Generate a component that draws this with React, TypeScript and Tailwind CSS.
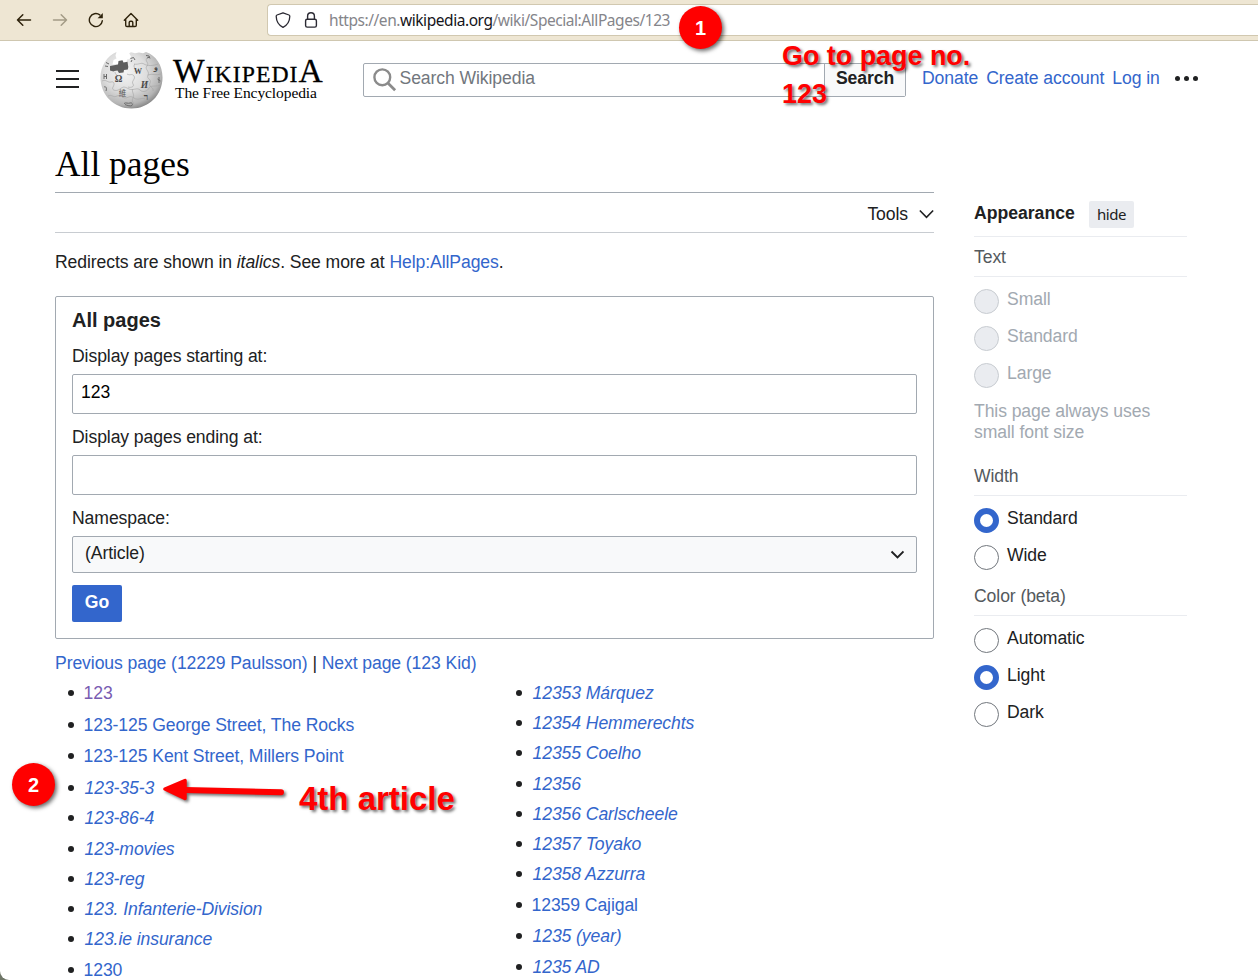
import React from "react";

type Entry = { title: string; row: string; redirect?: boolean; visited?: boolean };

const leftEntries: Entry[] = [
  { title: "123", row: "h-[32px]", visited: true },
  { title: "123-125 George Street, The Rocks", row: "h-[31px]" },
  { title: "123-125 Kent Street, Millers Point", row: "h-[32px]" },
  { title: "123-35-3", row: "h-[30px]", redirect: true },
  { title: "123-86-4", row: "h-[31px]", redirect: true },
  { title: "123-movies", row: "h-[30px]", redirect: true },
  { title: "123-reg", row: "h-[30px]", redirect: true },
  { title: "123. Infanterie-Division", row: "h-[30px]", redirect: true },
  { title: "123.ie insurance", row: "h-[31px]", redirect: true },
  { title: "1230", row: "h-[31px]" },
];

const rightEntries: Entry[] = [
  { title: "12353 Márquez", row: "h-[30px]", redirect: true },
  { title: "12354 Hemmerechts", row: "h-[30px]", redirect: true },
  { title: "12355 Coelho", row: "h-[31px]", redirect: true },
  { title: "12356", row: "h-[30px]", redirect: true },
  { title: "12356 Carlscheele", row: "h-[30px]", redirect: true },
  { title: "12357 Toyako", row: "h-[30px]", redirect: true },
  { title: "12358 Azzurra", row: "h-[31px]", redirect: true },
  { title: "12359 Cajigal", row: "h-[31px]" },
  { title: "1235 (year)", row: "h-[31px]", redirect: true },
  { title: "1235 AD", row: "h-[31px]", redirect: true },
];

function BrowserBar() {
  return (
    <div className="flex h-[41px] shrink-0 items-center border-b border-[#cfc7b0] bg-[#eee6d3]">
      <svg className="ml-4 h-4 w-4 shrink-0" viewBox="0 0 16 16" fill="none" stroke="#2e230c" strokeWidth="1.5" strokeLinecap="round" strokeLinejoin="round">
        <path d="M14.5 8H1.5M6.8 2.7L1.5 8l5.3 5.3" />
      </svg>
      <svg className="ml-5 h-4 w-4 shrink-0" viewBox="0 0 16 16" fill="none" stroke="#a39b86" strokeWidth="1.5" strokeLinecap="round" strokeLinejoin="round">
        <path d="M1.5 8h13M9.2 2.7L14.5 8l-5.3 5.3" />
      </svg>
      <svg className="ml-5 h-4 w-4 shrink-0" viewBox="0 0 16 16" fill="none" stroke="#2e230c" strokeWidth="1.4" strokeLinecap="round">
        <path d="M14.300 8.800A6.500 6.500 0 1 1 11.800 2.900" />
        <path d="M14.800 1v5.200H9.600z" fill="#2e230c" stroke="none" />
      </svg>
      <svg className="ml-[19px] h-4 w-4 shrink-0" viewBox="0 0 16 16" fill="none" stroke="#2e230c" strokeWidth="1.4" strokeLinecap="round" strokeLinejoin="round">
        <path d="M1.300 8.300L8 1.500l6.700 6.800M2.700 7v6.200c0 .8.500 1.300 1.300 1.300h8c.8 0 1.300-.5 1.300-1.300V7M6.200 14.200V10.600c0-.8.500-1.300 1.300-1.300h1c.8 0 1.300.5 1.300 1.300v3.600" />
      </svg>
      <div className="ml-[128px] flex h-8 flex-1 items-center rounded-l-[4px] border border-r-0 border-[#d1c8b0] bg-white">
        <svg className="ml-[7px] h-4 w-4 shrink-0" viewBox="0 0 16 16" fill="none" stroke="#2b2a33" strokeWidth="1.3" strokeLinejoin="round">
          <path d="M8 .8l6 2.200c.7.300.8.600.8 1.200C14.700 9.500 12.500 13 8 15.300 3.500 13 1.300 9.500 1.200 4.200c0-.6.1-.9.8-1.200z" />
        </svg>
        <svg className="ml-3 h-4 w-4 shrink-0" viewBox="0 0 16 16" fill="none" stroke="#2b2a33" strokeWidth="1.400">
          <rect x="2.600" y="7.200" width="10.800" height="7.900" rx="1.600" />
          <path d="M4.600 7V4.200a3.400 3.400 0 0 1 6.800 0V7" />
        </svg>
        <span className="ml-[10px] whitespace-nowrap font-['Noto_Sans'] text-[15.500px] tracking-[-0.445px] text-[#85858a]">
          https://en.<span className="text-[#15141a]">wikipedia.org</span>/wiki/Special:AllPages/123
        </span>
      </div>
    </div>
  );
}

function Globe() {
  return (
    <svg className="h-[60px] w-[64px] shrink-0" viewBox="0 0 64 60">
      <defs>
        <radialGradient id="ball" cx="0.4" cy="0.35" r="0.68">
          <stop offset="0" stopColor="#f4f4f4" />
          <stop offset="0.5" stopColor="#dedede" />
          <stop offset="0.85" stopColor="#b4b4b4" />
          <stop offset="1" stopColor="#858585" />
        </radialGradient>
      </defs>
      <path
        d="M16.500 2C7 6 .5 16 .5 27.500.5 45 14 58.500 31.500 58.500S62.500 45 62.500 27.500C62.500 15 56 5.500 46 2l-3 1.200-4-.7-4 .8-4-1-1.800 1 1.800 3.200-1.500 2.500-2.500.5-.5 3.500-14 1.500 1-4.500 3-1.500-1-3z"
        fill="url(#ball)"
      />
      <path d="M10 16l8-1.500.5-3.500 4-.8 1 2.300 4-.8.8 5.300-.5 2.500-3.800.5-.5 2.500-4.500.5-1.500-2.500-3 .5-1 .5-3.500-1z" fill="#5e5e5e" />
      <path
        d="M15 22c0 3 3 3 3 5M27 24c3 2 5-1 7 2s-3 5-1 8-3 4-5 3M35 14c-3 3 2 5 0 8M2 31c4-2 6 2 9 1s4 2 2 5 3 5 7 2 5-2 9 0 8-2 11 1 8 1 9-2 7-1 12-3M8 46c4-2 5 2 9 0s5 2 8 2 5-3 9 0 8-1 11 1M47 8c-3 3 3 5 0 8s3 5 1 9 4 4 2 8 4 4 3 8M33 39c-2 3 2 5 0 9s1 4 1 8M34 14c5 1 7-2 10 0s9 2 14 0M48 25c4-2 8 1 13-1"
        fill="none"
        stroke="#a3a3a3"
        strokeWidth="0.6"
      />
      <g className="font-['Liberation_Serif']" fill="#4a4a4a" fontWeight="bold" textAnchor="middle">
        <text x="18.500" y="32" fontSize="9.500">Ω</text>
        <text x="38" y="24" fontSize="8">W</text>
        <text x="44.500" y="38" fontSize="9.500" fontStyle="italic">И</text>
        <text x="46" y="50" fontSize="9">ר</text>
        <text x="56" y="20" fontSize="8">و</text>
      </g>
      <text x="22.500" y="46" fontSize="7.500" fill="#555" textAnchor="middle" className="font-['Noto_Sans_CJK_SC']">維</text>
      <g fill="none" stroke="#6a6a6a" strokeWidth="1">
        <path d="M24 53.500c2-1.500 4 .5 6-.5s3 1.500 2 2.500-5 0-7-1" />
        <path d="M6 12.500l3 1.500M5 16l3 .5M4 24v5M6.500 24v5M4 26.500h2.500M4 37c2-1 3 1 2 4M30.500 8.500l3-1 1.500 2.500M32 10l-1 2M46 5.500l3 .5 1 2.500M47 8l3-1M59 27v6M57.500 29l3 2" />
      </g>
    </svg>
  );
}

function Header() {
  return (
    <header className="flex h-[77px] shrink-0 items-center">
      <div className="mb-[2px] ml-14 flex w-[23px] shrink-0 flex-col gap-[6px]">
        <span className="h-[2px] bg-[#202122]" />
        <span className="h-[2px] bg-[#202122]" />
        <span className="h-[2px] bg-[#202122]" />
      </div>
      <div className="ml-[21px] flex w-[250px] shrink-0 items-center">
        <Globe />
        <div className="ml-[9px] whitespace-nowrap font-['Liberation_Serif'] text-black">
          <div className="h-[26px] text-[33.500px] leading-[26px] tracking-[1.050px] [-webkit-text-stroke:0.3px_black]">
            W<span className="text-[23.700px]">IKIPEDI</span>A
          </div>
          <div className="ml-[2px] h-[18px] text-[15.500px] leading-[18px]">The Free Encyclopedia</div>
        </div>
      </div>
      <div className="ml-[13px] flex h-[34px] w-[543px] shrink-0 rounded-[2px] border border-[#a2a9b1]">
        <div className="flex flex-1 items-center">
          <svg className="ml-[9px] mt-[1px] h-6 w-6" viewBox="0 0 24 24" fill="none" stroke="#8b8b8b" strokeWidth="2.400">
            <circle cx="9.300" cy="9.300" r="7.900" />
            <path d="M15.100 15.200l7 7" strokeWidth="2.800" />
          </svg>
          <span className="mb-[3px] ml-[2.500px] text-[#72777d]">Search Wikipedia</span>
        </div>
        <div className="flex w-[81px] items-center justify-center border-l border-[#a2a9b1] bg-[#f8f9fa] pb-[3px] font-bold">Search</div>
      </div>
      <nav className="ml-4 flex gap-2 whitespace-nowrap pb-[4px] text-[#36c]">
        <a>Donate</a>
        <a>Create account</a>
        <a>Log in</a>
      </nav>
      <div className="mb-[2px] ml-[15px] flex gap-1">
        <span className="h-[5px] w-[5px] rounded-full bg-[#202122]" />
        <span className="h-[5px] w-[5px] rounded-full bg-[#202122]" />
        <span className="h-[5px] w-[5px] rounded-full bg-[#202122]" />
      </div>
    </header>
  );
}

function PagesForm() {
  return (
    <section className="mt-[22px] flex h-[343px] flex-col rounded-[2px] border border-[#a2a9b1] px-4">
      <h2 className="mt-[11px] h-6 text-[20px] font-bold leading-6 tracking-normal">All pages</h2>
      <label className="mt-3 h-6 leading-6">Display pages starting at:</label>
      <div className="mt-[6px] flex h-10 items-center rounded-[2px] border border-[#a2a9b1] pb-[4px] pl-[8px] text-black">123</div>
      <label className="mt-[11px] h-6 leading-6">Display pages ending at:</label>
      <div className="mt-[6px] h-10 rounded-[2px] border border-[#a2a9b1]" />
      <label className="mt-[11px] h-6 leading-6">Namespace:</label>
      <div className="mt-[6px] flex h-[37px] items-center justify-between rounded-[2px] border border-[#a2a9b1] bg-[#f8f9fa] px-3">
        <span className="pb-[3px]">(Article)</span>
        <svg className="h-[14px] w-[14px]" viewBox="0 0 14 14" fill="none" stroke="#202122" strokeWidth="1.900">
          <path d="M1.500 3.500l6 6 6-6" />
        </svg>
      </div>
      <button className="mt-3 h-[37px] w-[50px] rounded-[2px] bg-[#36c] pb-[3px] font-bold text-white">Go</button>
    </section>
  );
}

function EntryList({ entries }: { entries: Entry[] }) {
  return (
    <ul className="w-[448px] shrink-0">
      {entries.map((entry) => (
        <li key={entry.title} className={`flex items-start ${entry.row}`}>
          <span className="mt-[9px] h-[6px] w-[6px] shrink-0 rounded-full bg-[#202122]" />
          <a
            className={`leading-6 ${entry.redirect ? "ml-[10.500px] italic" : "ml-[9.500px]"} ${entry.visited ? "text-[#795cb2]" : "text-[#36c]"}`}
          >
            {entry.title}
          </a>
        </li>
      ))}
    </ul>
  );
}

function Option({ label, checked, disabled }: { label: string; checked?: boolean; disabled?: boolean }) {
  const ring = checked
    ? "border-[6px] border-[#36c] bg-white"
    : disabled
      ? "border border-[#c8ccd1] bg-[#eaecf0]"
      : "border border-[#72777d] bg-white";
  return (
    <div className={`flex h-[37px] items-start ${disabled ? "text-[#a2a9b1]" : ""}`}>
      <span className={`h-[25px] w-[25px] rounded-full ${ring}`} />
      <span className="ml-2 leading-[20px]">{label}</span>
    </div>
  );
}

function GroupTitle({ children }: { children: React.ReactNode }) {
  return (
    <h3 className="mb-3 h-[40px] border-b border-[#eaecf0] leading-[40px] text-[#54595d]">{children}</h3>
  );
}

function Appearance() {
  return (
    <aside className="ml-10 mt-[83px] w-[213px]">
      <div className="flex h-[36px] items-start border-b border-[#eaecf0]">
        <span className="w-[101px] font-bold leading-6 tracking-normal">Appearance</span>
        <span className="ml-[14px] flex h-[27px] w-[45px] items-center justify-center rounded-[2px] bg-[#eaecf0] pb-[2px] font-['Noto_Sans'] text-[15px] tracking-[-0.5px]">
          hide
        </span>
      </div>
      <GroupTitle>Text</GroupTitle>
      <Option label="Small" disabled />
      <Option label="Standard" disabled />
      <Option label="Large" disabled />
      <p className="h-[56px] whitespace-nowrap pt-[1px] leading-[21px] text-[#a2a9b1]">
        This page always uses
        <br />
        small font size
      </p>
      <GroupTitle>Width</GroupTitle>
      <Option label="Standard" checked />
      <Option label="Wide" />
      <div className="-mt-[6px]">
        <GroupTitle>Color (beta)</GroupTitle>
      </div>
      <Option label="Automatic" />
      <Option label="Light" checked />
      <Option label="Dark" />
    </aside>
  );
}

function Annotations() {
  return (
    <div className="pointer-events-none absolute inset-0 overflow-hidden font-bold tracking-normal text-[#ff0000]">
      <div className="absolute left-[679px] top-[6px] flex h-[43px] w-[43px] items-center justify-center rounded-full bg-[#ff0000] text-[20px] text-white shadow-[2px_2px_4px_rgba(0,0,0,0.6)]">
        1
      </div>
      <div className="absolute left-[782px] top-[37px] whitespace-nowrap text-[26.900px] leading-[38px] [text-shadow:2px_2px_3px_rgba(0,0,0,0.55)]">
        Go to page no.
        <br />
        123
      </div>
      <div className="absolute left-[12px] top-[763px] flex h-[43px] w-[43px] items-center justify-center rounded-full bg-[#ff0000] text-[20px] text-white shadow-[2px_2px_4px_rgba(0,0,0,0.6)]">
        2
      </div>
      <svg className="absolute left-[155px] top-[770px] h-[40px] w-[140px] drop-shadow-[2px_2px_1.5px_rgba(0,0,0,0.55)]" viewBox="0 0 140 40">
        <path d="M30 20L126 22.300" stroke="#ff0000" strokeWidth="6" strokeLinecap="round" />
        <path d="M10 19L30 10.500V28.500z" fill="#ff0000" stroke="#ff0000" strokeWidth="3.500" strokeLinejoin="round" />
      </svg>
      <div className="absolute left-[299px] top-[780px] whitespace-nowrap text-[33px] leading-[38px] [text-shadow:2px_2px_3px_rgba(0,0,0,0.55)]">
        4th article
      </div>
    </div>
  );
}

export default function App() {
  return (
    <div className="relative h-[980px] w-[1258px] overflow-hidden bg-[#6f7667] font-['Liberation_Sans',sans-serif] text-[17.600px] leading-6 tracking-[-0.090px] text-[#202122]">
      <div className="flex h-[980px] flex-col overflow-hidden rounded-bl-[9px] bg-white">
        <BrowserBar />
        <Header />
        <div className="flex">
          <main className="ml-[55px] w-[879px]">
            <h1 className="mt-[26px] h-[49px] border-b border-[#a2a9b1] font-['Liberation_Serif'] text-[35.400px] leading-[40px] tracking-normal text-black">
              All pages
            </h1>
            <div className="flex h-[40px] items-center justify-end gap-[11px] border-b border-[#c8ccd1]">
              <span className="pt-[2px]">Tools</span>
              <svg className="mt-[2px] h-[15px] w-[15px]" viewBox="0 0 14 14" fill="none" stroke="#202122" strokeWidth="1.500">
                <path d="M.8 4.200L7 10.500l6.200-6.300" />
              </svg>
            </div>
            <p className="mt-[17px] h-6">
              Redirects are shown in <i>italics</i>. See more at <a className="text-[#36c]">Help:AllPages</a>.
            </p>
            <PagesForm />
            <p className="mt-3 h-6 whitespace-nowrap">
              <a className="text-[#36c]">Previous page (12229 Paulsson)</a> | <a className="text-[#36c]">Next page (123 Kid)</a>
            </p>
            <div className="ml-[13px] mt-[6px] flex">
              <EntryList entries={leftEntries} />
              <EntryList entries={rightEntries} />
            </div>
          </main>
          <Appearance />
        </div>
      </div>
      <Annotations />
    </div>
  );
}
